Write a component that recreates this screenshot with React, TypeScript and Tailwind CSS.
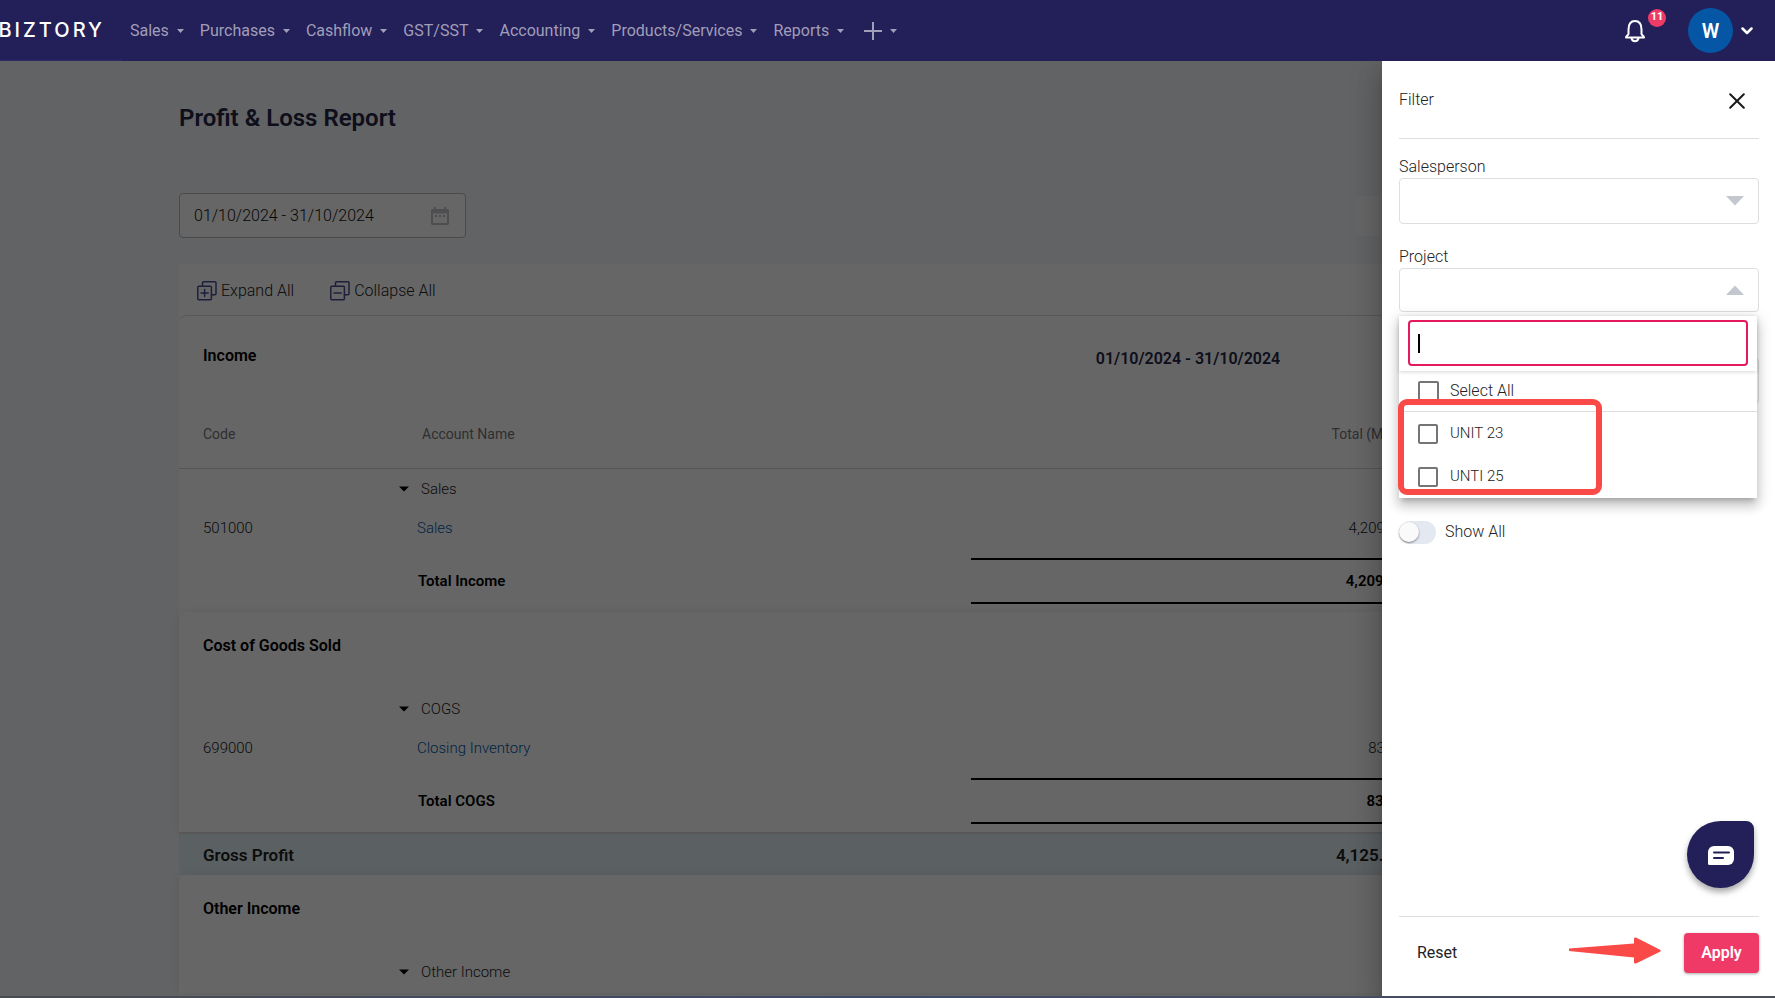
import type { ReactNode } from 'react';

const navItems = ['Sales', 'Purchases', 'Cashflow', 'GST/SST', 'Accounting', 'Products/Services', 'Reports'];

function Caret() {
  return (
    <svg width="7" height="4" viewBox="0 0 7 4" fill="currentColor" aria-hidden="true">
      <path d="M0 0h7L3.500 4z" />
    </svg>
  );
}

function StackIcon({ plus }: { plus?: boolean }) {
  return (
    <svg width="20" height="20" viewBox="0 0 20 20" fill="none" stroke="#4a4f96" strokeWidth="1.5" strokeLinecap="round" strokeLinejoin="round" aria-hidden="true">
      <path d="M5.5 5V1.8c0-.6.4-1 1-1H18c.6 0 1 .4 1 1v11c0 .6-.4 1-1 1h-3.5" />
      <rect x="0.8" y="5.2" width="13.6" height="13.6" rx="1" />
      <path d="M4 12h7.2" />
      {plus && <path d="M7.6 8.4v7.2" />}
    </svg>
  );
}

function Header() {
  return (
    <header className="relative z-20 flex h-[61px] shrink-0 items-center bg-[#231f59]">
      <a href="#home" className="flex h-full w-[122px] items-center justify-end border-b border-[#2f2b66] pr-[17px] font-['Inter',sans-serif] text-xl font-medium tracking-[3px] text-white">
        BIZTORY
      </a>
      <nav className="ml-2 flex flex-1 items-center gap-4 text-base text-[#a09eb8]">
        {navItems.map((item) => (
          <button key={item} type="button" className="flex items-center gap-2">
            {item}
            <Caret />
          </button>
        ))}
        <button type="button" aria-label="Create new" className="ml-1 flex items-center gap-2">
          <svg width="18" height="18" viewBox="0 0 18 18" stroke="currentColor" strokeWidth="2" aria-hidden="true">
            <path d="M9 0v18M0 9h18" />
          </svg>
          <Caret />
        </button>
      </nav>
      <div className="flex items-center pr-[22px]">
        <button type="button" aria-label="Notifications" className="relative mr-[42px] text-white">
          <svg width="22" height="24" viewBox="0 0 22 24" fill="none" stroke="currentColor" strokeWidth="2" strokeLinecap="round" strokeLinejoin="round" aria-hidden="true">
            <path d="M4.5 10.5C4.500 5 7 2 11 2s6.500 3 6.500 8.500v4.500c0 1 2.500 1.800 2.500 3.500H2c0-1.700 2.500-2.500 2.500-3.500z" />
            <path d="M7.500 19c.3 2 1.500 3.200 3.500 3.200s3.200-1.200 3.500-3.200" />
          </svg>
          <span className="absolute -top-2.5 left-6 flex size-[18px] items-center justify-center rounded-full bg-[#ee3c66] text-[11px] font-bold">11</span>
        </button>
        <button type="button" aria-label="Account" className="flex items-center gap-2 text-white">
          <span className="flex size-[45px] items-center justify-center rounded-full bg-[#0556a5] text-xl font-semibold">W</span>
          <svg width="12" height="8" viewBox="0 0 12 8" fill="none" stroke="currentColor" strokeWidth="2.5" strokeLinecap="round" strokeLinejoin="round" aria-hidden="true">
            <path d="M1.500 1.500 6 6l4.500-4.500" />
          </svg>
        </button>
      </div>
    </header>
  );
}

function Section({ title, children }: { title: string; children: ReactNode }) {
  return (
    <section className="rounded-t-lg bg-white shadow-[0_0_10px_rgba(0,0,0,0.08)]">
      <h2 className="mb-2 flex h-[68px] items-center pl-6 text-base font-semibold text-black">{title}</h2>
      {children}
    </section>
  );
}

type LedgerProps = { head?: boolean; group: string; code?: string; account?: string; amount?: string; totalLabel?: string };

function Ledger({ head, group, code, account, amount, totalLabel }: LedgerProps) {
  return (
    <table className="w-full table-fixed text-left text-[15px] font-light text-[#222]">
      <colgroup>
        <col className="w-[214px]" />
        <col />
        <col className="w-[434px]" />
        <col className="w-[191px]" />
      </colgroup>
      {head && (
        <thead>
          <tr className="h-[68px] border-b border-[#d5d5d5] text-sm text-[#777]">
            <th className="pl-6 font-normal">Code</th>
            <th className="pl-[29px] font-normal">Account Name</th>
            <th className="text-right font-normal">Total (MYR)</th>
            <th />
          </tr>
        </thead>
      )}
      <tbody>
        <tr className="h-[42px]">
          <td />
          <td>
            <button type="button" className="flex items-center gap-3 pl-1.5 text-[#222]">
              <svg width="10" height="6" viewBox="0 0 10 6" fill="#000" aria-hidden="true">
                <path d="M0 .5h10L5 5.500z" />
              </svg>
              {group}
            </button>
          </td>
          <td />
          <td />
        </tr>
        {code && (
          <tr className="h-9">
            <td className="pl-6">{code}</td>
            <td className="pl-6">
              <a href="#account" className="text-[#0057a8]">{account}</a>
            </td>
            <td className="text-right">{amount}</td>
            <td />
          </tr>
        )}
        {totalLabel && (
          <>
            <tr className="h-[13px]">
              <td colSpan={4} />
            </tr>
            <tr className="h-11 font-semibold text-black">
              <td />
              <td className="pl-[25px]">{totalLabel}</td>
              <td className="border-y-2 border-black text-right">{amount}</td>
              <td />
            </tr>
          </>
        )}
      </tbody>
    </table>
  );
}

function Report() {
  return (
    <main className="flex-1 bg-[#f6f7f9] px-[179px]">
      <h1 className="pt-[41px] text-2xl font-semibold text-[#232645]">Profit &amp; Loss Report</h1>
      <div className="flex items-center justify-between pt-[59px]">
        <div className="flex h-[45px] w-[287px] items-center justify-between rounded border border-[#b9b9bd] bg-white pr-4 pl-3.5">
          <input aria-label="Date range" readOnly value="01/10/2024 - 31/10/2024" className="min-w-0 flex-1 bg-transparent text-base font-light text-[#111] outline-none" />
          <svg width="18" height="20" viewBox="0 0 18 20" fill="#c3c3cb" aria-hidden="true">
            <path fillRule="evenodd" d="M3 1h2v2h8V1h2v2h1.500c.8 0 1.500.7 1.500 1.500v13c0 .8-.7 1.500-1.500 1.500h-15C.7 19 0 18.300 0 17.500v-13C0 3.700.7 3 1.500 3H3zm-1 6.500V17h14V7.500z" />
            <path d="M4 9h2v2H4zm4 0h2v2H8zm4 0h2v2h-2z" />
          </svg>
        </div>
        <button type="button" aria-label="More options" className="flex h-10 w-60 items-center rounded bg-white pl-6 text-[#555]">⋮</button>
      </div>
      <div className="mt-[26px] bg-white pb-10">
        <div className="flex h-[51px] items-center gap-9 pt-0.5 pl-[18px] text-base font-light text-[#222]">
          <button type="button" className="flex items-center gap-1">
            <StackIcon plus />
            Expand All
          </button>
          <button type="button" className="flex items-center gap-1">
            <StackIcon />
            Collapse All
          </button>
        </div>
        <section className="rounded-t-lg border-t border-[#d9d9d9]">
          <div className="flex h-[84px] items-center">
            <h2 className="flex-1 pb-1 pl-6 text-base font-semibold text-black">Income</h2>
            <p className="w-[434px] pt-0.5 text-center text-base font-semibold text-[#232645]">01/10/2024 - 31/10/2024</p>
            <div className="w-[191px]" />
          </div>
          <Ledger head group="Sales" code="501000" account="Sales" amount="4,209.00" totalLabel="Total Income" />
          <div className="h-2" />
        </section>
        <Section title="Cost of Goods Sold">
          <Ledger group="COGS" code="699000" account="Closing Inventory" amount="83.50" totalLabel="Total COGS" />
          <div className="h-2" />
        </Section>
        <div className="flex h-[43px] items-center border-t-2 border-[#dcd8d8] bg-[#e4f0f7] pt-0.5 text-[17px] font-semibold text-[#222]">
          <h2 className="flex-1 pl-6">Gross Profit</h2>
          <p className="w-[434px] pr-0.5 text-right">4,125.50</p>
          <div className="w-[191px]" />
        </div>
        <Section title="Other Income">
          <Ledger group="Other Income" />
        </Section>
      </div>
    </main>
  );
}

function Option({ label }: { label: string }) {
  return (
    <label className="flex h-[43px] items-center gap-3 pl-[19px] text-[15px] font-light text-[#222]">
      <input type="checkbox" className="size-5 appearance-none rounded-xs border-2 border-[#757575]" />
      {label}
    </label>
  );
}

function SelectBox({ id, up }: { id: string; up?: boolean }) {
  return (
    <div className="relative">
      <select id={id} className={up ? 'block h-11 w-full appearance-none rounded border border-[#dcdee0] bg-white' : 'block h-[46px] w-full appearance-none rounded border border-[#dcdee0] bg-white'}>
        <option value="" />
      </select>
      <svg width="18" height="10" viewBox="0 0 18 10" fill="#c4c8ce" aria-hidden="true" className="pointer-events-none absolute inset-y-0 right-[15px] my-auto">
        {up ? <path d="M0 10h18L9 .5z" /> : <path d="M0 0h18L9 9.500z" />}
      </svg>
    </div>
  );
}

function FilterDrawer() {
  return (
    <aside className="absolute top-[61px] right-0 bottom-0.5 z-10 flex w-[393px] flex-col bg-white pr-4 pl-[17px] text-base font-light text-[#222] shadow-[0_8px_10px_-5px_rgba(0,0,0,0.2),0_16px_24px_2px_rgba(0,0,0,0.14),0_6px_30px_5px_rgba(0,0,0,0.12)]">
      <div className="flex h-[78px] items-center justify-between border-b border-[#dedede] pr-3.5">
        <h2>Filter</h2>
        <button type="button" aria-label="Close filter" className="pt-0.5">
          <svg width="16" height="16" viewBox="0 0 16 16" stroke="#1a1a1a" strokeWidth="2" strokeLinecap="round" aria-hidden="true">
            <path d="M1.200 1.200l13.600 13.600M14.800 1.200 1.200 14.800" />
          </svg>
        </button>
      </div>
      <div className="mt-[17px]">
        <label htmlFor="salesperson" className="block leading-[22px]">Salesperson</label>
        <SelectBox id="salesperson" />
      </div>
      <div className="relative mt-[22px]">
        <label htmlFor="project" className="block leading-[22px]">Project</label>
        <SelectBox id="project" up />
        <div className="absolute top-full right-0.5 left-0 z-10 mt-1 bg-white shadow-[0_5px_5px_-3px_rgba(0,0,0,0.2),0_8px_10px_1px_rgba(0,0,0,0.14),0_3px_14px_2px_rgba(0,0,0,0.12)]">
          <div className="relative px-[9px] pt-1 pb-[5px] shadow-[0_1px_4px_rgba(0,0,0,0.16)]">
            <input aria-label="Search project" className="block h-[46px] w-full rounded border-2 border-[#e4195f] bg-white px-2 outline-none" />
            <span className="absolute top-[18px] left-[19px] h-[19px] w-0.5 bg-black" />
          </div>
          <div className="flex h-[41px] items-center border-b border-[#dedede]">
            <label className="flex items-center gap-[11px] pl-[19px]">
              <input type="checkbox" className="size-[21px] appearance-none rounded-xs border-2 border-[#757575]" />
              Select All
            </label>
          </div>
          <Option label="UNIT 23" />
          <Option label="UNTI 25" />
          <div className="pointer-events-none absolute bottom-[3px] -left-px h-24 w-[204px] rounded-[9px] border-[6px] border-[#f94a47]" />
        </div>
      </div>
      <div className="mt-[46px]">
        <select aria-label="Status" className="block h-[46px] w-full appearance-none rounded border border-[#dcdee0] bg-white">
          <option value="" />
        </select>
      </div>
      <label className="mt-[116px] flex items-center gap-[9px]">
        <input type="checkbox" role="switch" className="peer sr-only" />
        <span className="flex h-[23px] w-[37px] items-center rounded-full bg-[#e4e8f1]">
          <span className="size-5 rounded-full bg-[#fafafa] shadow-[0_1px_2px_rgba(0,0,0,0.45)]" />
        </span>
        Show All
      </label>
      <div className="mt-auto flex h-20 items-center border-t border-[#dedede]">
        <button type="button" className="flex-1 pb-2 pl-[18px] text-left font-normal">Reset</button>
        <svg width="92" height="27" viewBox="0 0 92 27" fill="#f94a47" aria-hidden="true" className="mr-[23px] mb-3">
          <path d="M0 11.500 65 6.500V2c0-1.500 1-2 2.500-1.300L91 12.700c1 .5 1 1.500 0 2L67.500 26.300C66 27 65 26.500 65 25v-4.500L0 14z" />
        </svg>
        <button type="button" className="mb-[7px] h-10 w-[75px] rounded bg-[#ef3a67] font-semibold text-white shadow-[0_1px_3px_rgba(0,0,0,0.35)]">Apply</button>
      </div>
      <button type="button" aria-label="Open chat" className="absolute right-[21px] bottom-[108px] flex size-[67px] items-center justify-center rounded-t-[34px] rounded-b-[34px] rounded-tr-lg bg-[#231f59] shadow-[0_4px_6px_rgba(0,0,0,0.35)]">
        <svg width="26" height="19" viewBox="0 0 26 19" aria-hidden="true" className="mt-0.5">
          <path d="M6 0h14a6 6 0 0 1 6 6v7a6 6 0 0 1-6 6H1.500A1.500 1.500 0 0 1 0 17.500V6a6 6 0 0 1 6-6z" fill="#fff" />
          <path d="M6 6.500h15M6 12h9" stroke="#231f59" strokeWidth="2" strokeLinecap="round" />
        </svg>
      </button>
    </aside>
  );
}

export default function App() {
  return (
    <div className="relative flex h-screen flex-col overflow-hidden font-['Roboto',sans-serif]">
      <Header />
      <Report />
      <div className="absolute inset-0 bg-black/60" />
      <FilterDrawer />
      <div className="absolute inset-x-0 bottom-0 z-10 h-0.5 bg-linear-to-r from-[#484b50] via-[#3f4a6b] to-[#4b4f57]" />
    </div>
  );
}
